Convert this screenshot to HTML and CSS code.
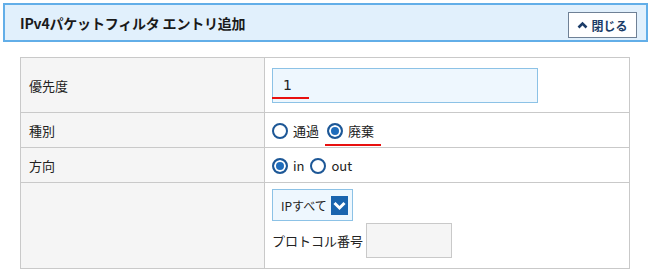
FILE: index.html
```html
<!DOCTYPE html>
<html lang="ja">
<head>
    <meta charset="UTF-8">
    <title>IPv4パケットフィルタ エントリ追加</title>
    <link rel="stylesheet" href="styles.css">
</head>
<body>
<div class="panel-head">
    <h2>IPv4パケットフィルタ エントリ追加</h2>
    <button class="btn-close">
        <svg width="11" height="8" viewBox="0 0 11 8"><polyline points="1.5,6.5 5.5,2.5 9.5,6.5" fill="none" stroke="#1b3c68" stroke-width="2.6"/></svg>
        閉じる
    </button>
</div>
<table class="form">
    <tr class="row-prio">
        <th>優先度</th>
        <td>
            <div class="field mark">
                <span class="text-in">1</span>
            </div>
        </td>
    </tr>
    <tr class="row-small">
        <th>種別</th>
        <td>
            <span class="radio"></span><span class="lbl">通過</span>
            <span class="mark-inline"><span class="radio on"></span><span class="lbl">廃棄</span></span>
        </td>
    </tr>
    <tr class="row-small">
        <th>方向</th>
        <td>
            <span class="radio on"></span><span class="lbl">in</span>
            <span class="radio"></span><span class="lbl">out</span>
        </td>
    </tr>
    <tr class="row-proto">
        <th></th>
        <td>
            <div class="select">
                IPすべて
                <span class="arrow">
                    <svg width="17" height="19" viewBox="0 0 17 19"><polyline points="3.5,7 8.5,12 13.5,7" fill="none" stroke="#fff" stroke-width="3"/></svg>
                </span>
            </div>
            <div class="proto">
                <span>プロトコル番号</span>
                <span class="num-box"></span>
            </div>
        </td>
    </tr>
</table>
</body>
</html>
```

FILE: styles.css
```css
* {
    margin: 0;
    padding: 0;
    box-sizing: border-box;
}

body {
    font-family: "Noto Sans CJK JP", "Noto Sans", sans-serif;
    font-size: 13px;
    color: #222;
    background: #fff;
}

.panel-head {
    margin: 3px 6px 0 3px;
    height: 39px;
    border: 2px solid #62aee8;
    background-color: #e1f0fc;
    display: flex;
    align-items: center;
    justify-content: space-between;
    padding: 0 9px 0 15px;
}

.panel-head h2 {
    font-size: 14px;
    font-weight: bold;
    color: #1a1a1a;
    letter-spacing: -0.2px;
}

.btn-close {
    width: 69px;
    height: 26px;
    margin-top: 5px;
    border: 1px solid #6f8196;
    background: #fff;
    color: #1b3c68;
    font-family: inherit;
    font-size: 12px;
    font-weight: bold;
    display: flex;
    align-items: center;
    justify-content: center;
    gap: 3px;
}

.form {
    margin: 15px 0 0 20px;
    width: 610px;
    border-collapse: collapse;
}

.form th,
.form td {
    border: 1px solid #c9c9c9;
    text-align: left;
    vertical-align: middle;
}

.form th {
    width: 244px;
    background-color: #f5f5f5;
    font-weight: normal;
    padding-left: 8px;
}

.form td {
    padding-left: 7px;
}

.row-prio {
    height: 55px;
}

.row-small {
    height: 35px;
}

.row-proto {
    height: 86px;
}

.row-proto td {
    vertical-align: top;
    padding-top: 6px;
}

.field {
    width: 266px;
    height: 35px;
    border: 1px solid #8cc2e6;
    background-color: #eef7fe;
    padding-left: 10px;
    display: flex;
    align-items: center;
    position: relative;
    font-family: "DejaVu Sans", sans-serif;
    font-size: 14px;
}

.field.mark::after {
    content: "";
    position: absolute;
    left: -1px;
    bottom: 3px;
    width: 37px;
    height: 2px;
    background: #e8100f;
}

.radio {
    display: inline-block;
    width: 16px;
    height: 16px;
    border: 2px solid #1d5796;
    border-radius: 50%;
    background: #fff;
    vertical-align: -3px;
}

.radio.on {
    background: #1f6cbb;
    box-shadow: inset 0 0 0 2px #fff;
}

.lbl {
    margin: 0 3px 0 5px;
}

.mark-inline {
    position: relative;
    padding: 0 4px 0 2px;
}

.mark-inline::after {
    content: "";
    position: absolute;
    left: 0;
    right: 0;
    bottom: -6px;
    height: 2px;
    background: #e8100f;
}

.select {
    width: 81px;
    height: 32px;
    border: 1px solid #8cc2e6;
    background-color: #eef7fe;
    display: flex;
    align-items: center;
    padding-left: 8px;
    gap: 4px;
    font-size: 12px;
}

.arrow {
    display: flex;
    width: 17px;
    height: 19px;
    background: #1a64ae;
}

.proto {
    display: flex;
    align-items: center;
    margin-top: 2px;
    gap: 3px;
}

.num-box {
    width: 86px;
    height: 35px;
    border: 1px solid #c9c9c9;
    background-color: #f5f5f5;
}
```
